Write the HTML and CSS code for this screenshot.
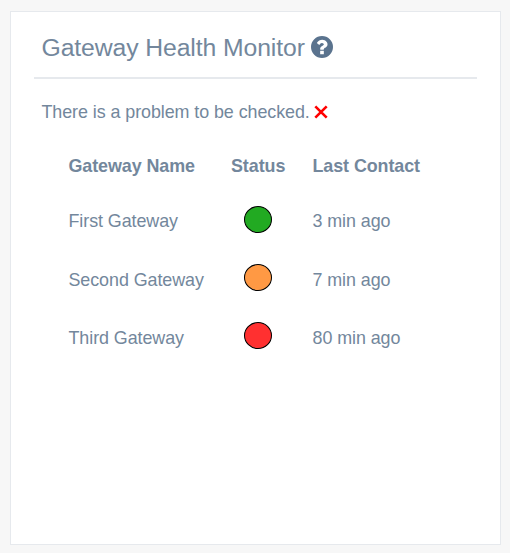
FILE: index.html
```html
<!DOCTYPE html>
<html lang="en">
<head>
<meta charset="utf-8">
<title>Gateway Health Monitor</title>
<link rel="stylesheet" href="styles.css">
</head>
<body>
<main class="panel">
  <header class="panel-title">
    <h2>Gateway Health Monitor</h2>
    <svg class="help" viewBox="0 0 1536 1536" aria-hidden="true"><path fill-rule="evenodd" d="M768 0a768 768 0 1 1 0 1536a768 768 0 1 1 0-1536zM896 1248v-192q0-14-9-23t-23-9H672q-14 0-23 9t-9 23v192q0 14 9 23t23 9h192q14 0 23-9t9-23zM1152 576q0-88-55.500-163T958 297t-170-41q-243 0-371 213-15 24 8 42l132 100q7 6 19 6 16 0 25-12 53-68 86-92 34-24 86-24 48 0 85.500 26t37.500 59q0 38-20 61t-68 45q-63 28-115.500 86.500T640 892v36q0 14 9 23t23 9h192q14 0 23-9t9-23q0-19 21.500-49.500T972 829q32-18 49-28.500t46-35 44.500-48 28-60.500 12.500-81z"/></svg>
  </header>
  <p class="message">There is a problem to be checked.
    <svg class="cross" viewBox="0 0 14 14" aria-hidden="true"><path d="M1.300 1.300L12.700 12.700M12.700 1.300L1.300 12.700"/></svg>
  </p>
  <table class="gateways">
    <thead>
      <tr><th class="name">Gateway Name</th><th class="status">Status</th><th>Last Contact</th></tr>
    </thead>
    <tbody>
      <tr><td>First Gateway</td><td class="status"><span class="light ok"></span></td><td>3 min ago</td></tr>
      <tr class="lower"><td>Second Gateway</td><td class="status"><span class="light warning"></span></td><td>7 min ago</td></tr>
      <tr class="lower"><td>Third Gateway</td><td class="status"><span class="light error"></span></td><td>80 min ago</td></tr>
    </tbody>
  </table>
</main>
</body>
</html>
```
FILE: styles.css
```css
* { box-sizing: border-box; }

body {
  margin: 0;
  padding: 11px 9px 8px 10px;
  height: 553px;
  overflow: hidden;
  background: #f7f7f7;
  color: #73879c;
  font: 17.9px/27px "Liberation Sans", Arial, sans-serif;
  letter-spacing: -0.07px;
}

.panel {
  height: 534px;
  padding: 14px 23px;
  background: #fff;
  border: 1px solid #e6e9ed;
}

.panel-title {
  display: flex;
  align-items: center;
  height: 53px;
  padding: 0 7.5px 8px;
  border-bottom: 2px solid #e6e9ed;
}

h2 {
  margin: 0;
  font-size: 24.75px;
  font-weight: 400;
  line-height: 30px;
  letter-spacing: -0.1px;
}

.help {
  width: 22px;
  height: 22px;
  margin: 0 0 1px 6.5px;
  fill: #5a738e;
}

.message {
  display: flex;
  align-items: center;
  gap: 5px;
  margin: 20px 0 0 7.5px;
}

.cross {
  width: 14px;
  height: 14px;
  margin: 0 0 2px -0.5px;
  fill: none;
  stroke: #f00;
  stroke-width: 2.6;
}

.gateways {
  width: 380px;
  margin: 13px 0 0 21px;
  border-collapse: collapse;
  table-layout: fixed;
}

th, td {
  height: 58px;
  padding: 0 0 1px 13.5px;
  text-align: left;
  vertical-align: middle;
}

th {
  height: 54px;
  padding-bottom: 0;
}

.lower td { padding-bottom: 0; }

.name { width: 162px; }

.status {
  width: 82px;
  padding-left: 14px;
  padding-right: 14px;
  text-align: center;
}

tbody td.status { padding-bottom: 5px; }

.light {
  display: block;
  width: 28px;
  height: 27px;
  margin: 0 auto;
  border: 1px solid #000;
  border-radius: 50%;
}

.ok { background: #22aa22; }
.warning { background: #ff9944; }
.error { background: #ff3030; }
```
